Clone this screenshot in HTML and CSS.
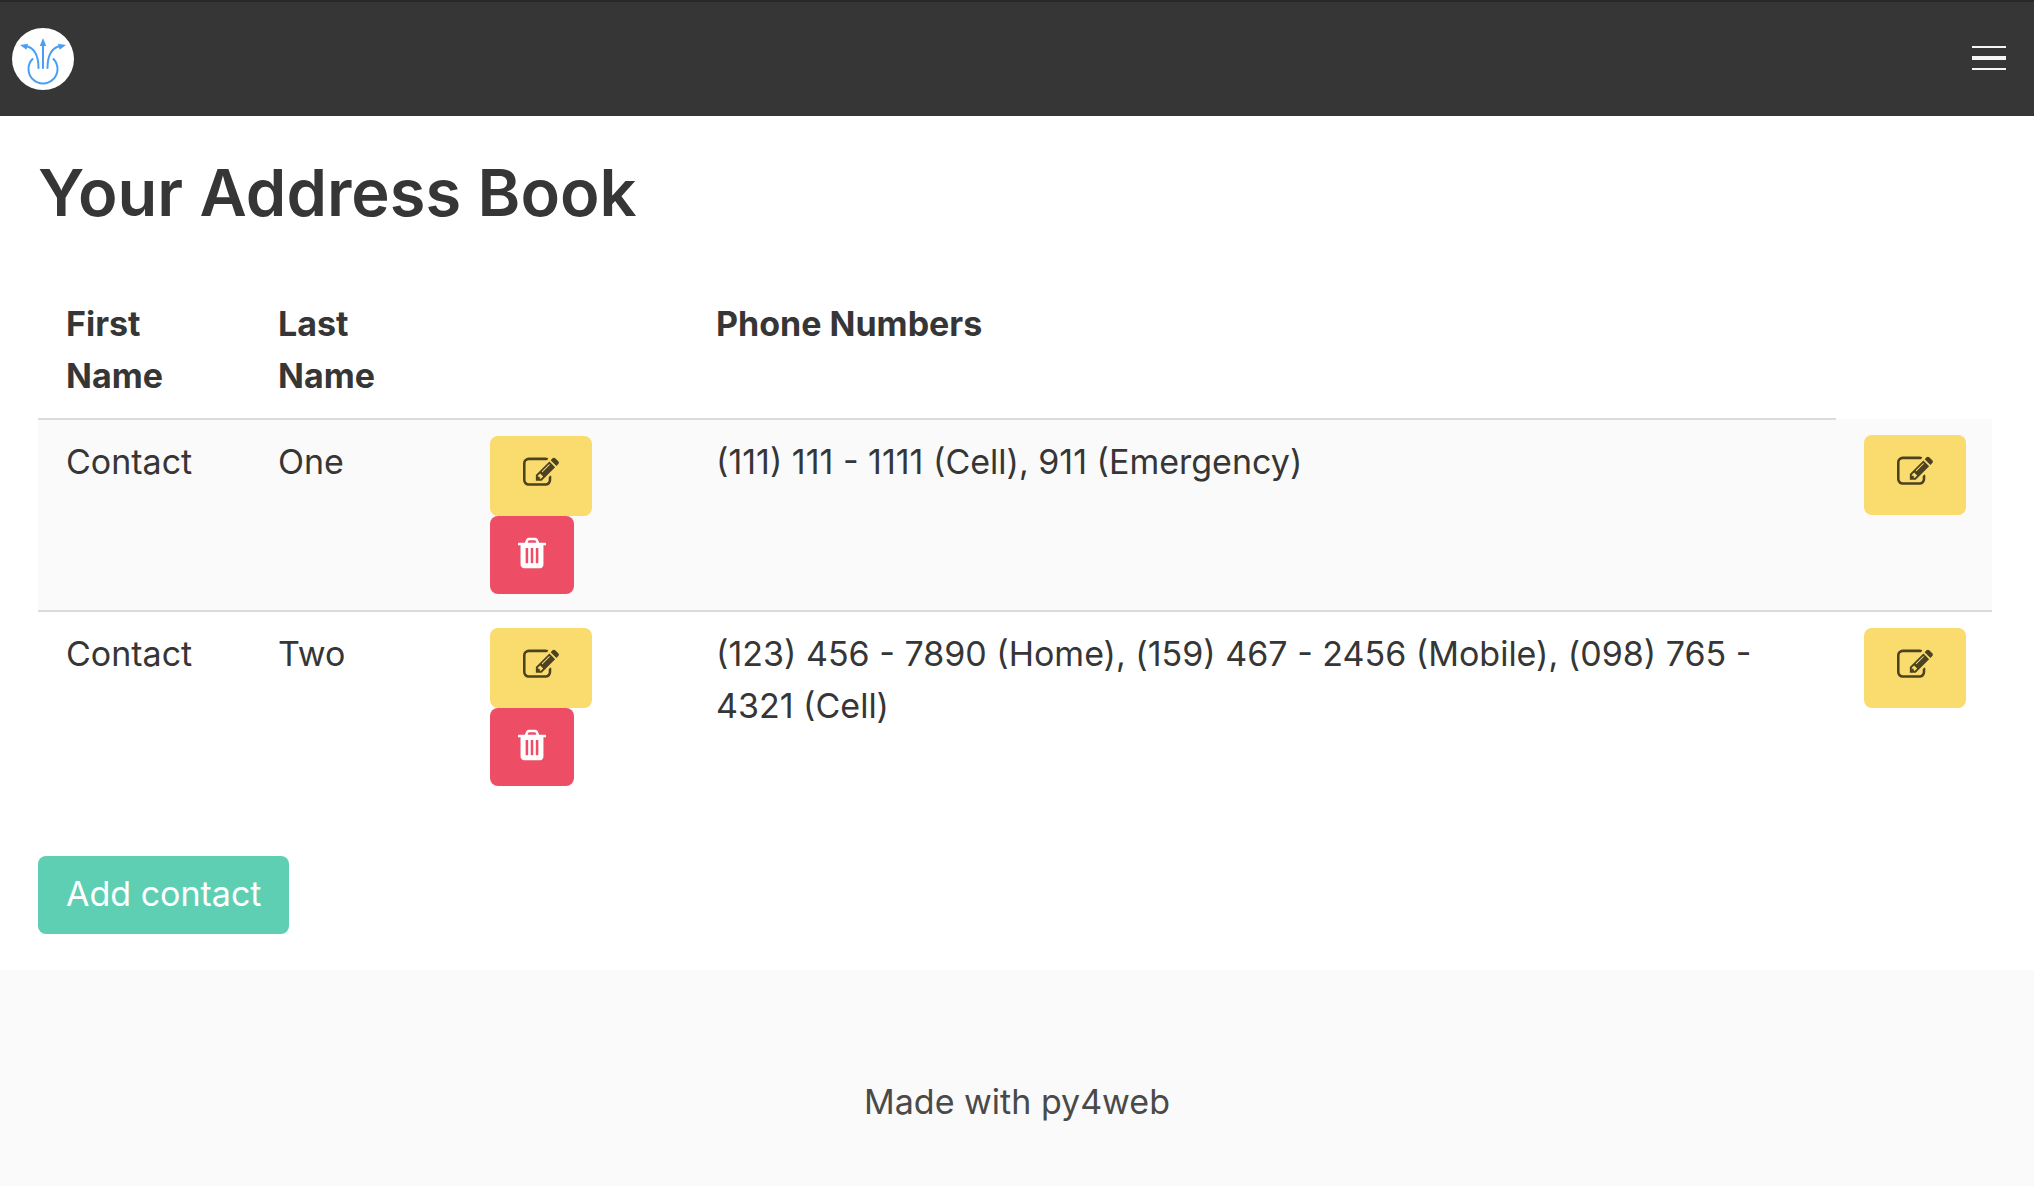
FILE: index.html
```html
<!DOCTYPE html>
<html lang="en">
<head>
<meta charset="utf-8">
<meta name="viewport" content="width=device-width, initial-scale=1">
<title>Your Address Book</title>
<link rel="stylesheet" href="styles.css">
</head>
<body>
<svg class="sprite" aria-hidden="true">
  <symbol id="icon-edit" viewBox="0 0 1792 1792">
    <path d="M888 1184l116-116-152-152-116 116v56h96v96h56zm440-720q-16-16-33 1l-350 350q-17 17-1 33t33-1l350-350q17-17 1-33zm80 594v190q0 119-84.500 203.500t-203.500 84.500h-832q-119 0-203.500-84.500t-84.500-203.500v-832q0-119 84.500-203.500t203.500-84.500h832q63 0 117 25 15 7 18 23 3 17-9 29l-49 49q-14 14-32 8-23-6-45-6h-832q-66 0-113 47t-47 113v832q0 66 47 113t113 47h832q66 0 113-47t47-113v-126q0-13 9-22l64-64q15-15 35-7t20 29zm-96-738l288 288-672 672h-288v-288zm444 132l-92 92-288-288 92-92q28-28 68-28t68 28l152 152q28 28 28 68t-28 68z"/>
  </symbol>
  <symbol id="icon-trash" viewBox="0 0 1408 1792">
    <path d="M512 1376v-704q0-14-9-23t-23-9h-64q-14 0-23 9t-9 23v704q0 14 9 23t23 9h64q14 0 23-9t9-23zm256 0v-704q0-14-9-23t-23-9h-64q-14 0-23 9t-9 23v704q0 14 9 23t23 9h64q14 0 23-9t9-23zm256 0v-704q0-14-9-23t-23-9h-64q-14 0-23 9t-9 23v704q0 14 9 23t23 9h64q14 0 23-9t9-23zm-544-992h448l-48-117q-7-9-17-11h-317q-10 2-17 11zm928 32v64q0 14-9 23t-23 9h-96v948q0 83-47 143.500t-113 60.500h-832q-66 0-113-58.500t-47-141.500v-952h-96q-14 0-23-9t-9-23v-64q0-14 9-23t23-9h309l70-167q15-37 54-63t79-26h320q40 0 79 26t54 63l70 167h309q14 0 23 9t9 23z"/>
  </symbol>
</svg>

<nav class="navbar">
  <a class="brand" href="#" aria-label="Home">
    <svg class="logo" viewBox="0 0 62 62" fill="none" stroke="#4a9ff5" stroke-width="2" stroke-linecap="round">
      <circle cx="31" cy="31" r="31" fill="#fff" stroke="none"/>
      <path d="M20.500 31A14.500 14.500 0 1 0 41.500 31M31 40V15M26.500 40C26.500 28 22.500 20 14 18M35.500 40C35.500 28 39.500 20 48 18"/>
      <path fill="#4a9ff5" stroke="none" d="M31 10l3.200 8h-6.400zM8 17l8-1.200-1.500 6zM54 17l-8-1.200 1.500 6z"/>
    </svg>
  </a>
  <button class="burger" type="button" aria-label="Menu"><span class="bar"></span><span class="bar bar-mid"></span><span class="bar"></span></button>
</nav>

<main class="content">
  <h1 class="title">Your Address Book</h1>
  <table class="table">
    <colgroup><col class="col-name"><col class="col-name"><col class="col-tools"><col><col class="col-edit"></colgroup>
    <thead>
      <tr><th>First Name</th><th>Last Name</th><th></th><th>Phone Numbers</th></tr>
    </thead>
    <tbody>
      <tr>
        <td>Contact</td>
        <td>One</td>
        <td><div class="tools">
          <button class="btn btn-edit" type="button" aria-label="Edit contact"><svg class="icon"><use href="#icon-edit"/></svg></button>
          <button class="btn btn-delete" type="button" aria-label="Delete contact"><svg class="icon icon-small"><use href="#icon-trash"/></svg></button>
        </div></td>
        <td>(111) 111 - 1111 (Cell), 911 (Emergency)</td>
        <td><div class="tools"><button class="btn btn-edit" type="button" aria-label="Edit phone numbers"><svg class="icon"><use href="#icon-edit"/></svg></button></div></td>
      </tr>
      <tr>
        <td>Contact</td>
        <td>Two</td>
        <td><div class="tools">
          <button class="btn btn-edit" type="button" aria-label="Edit contact"><svg class="icon"><use href="#icon-edit"/></svg></button>
          <button class="btn btn-delete" type="button" aria-label="Delete contact"><svg class="icon icon-small"><use href="#icon-trash"/></svg></button>
        </div></td>
        <td>(123) 456 - 7890 (Home), (159) 467 - 2456 (Mobile), (098) 765 - 4321 (Cell)</td>
        <td><div class="tools"><button class="btn btn-edit" type="button" aria-label="Edit phone numbers"><svg class="icon"><use href="#icon-edit"/></svg></button></div></td>
      </tr>
    </tbody>
  </table>
  <button class="btn btn-add" type="button">Add contact</button>
</main>

<footer class="footer"><p>Made with py4web</p></footer>
</body>
</html>
```
FILE: styles.css
```css
* {
  box-sizing: border-box;
}

body {
  margin: 0;
  background: #fff;
  color: #363636;
  font: 400 34px/52px Inter, "Liberation Sans", sans-serif;
}

.sprite {
  display: none;
}

.navbar {
  display: flex;
  align-items: center;
  justify-content: space-between;
  padding: 26px 28px 26px 12px;
  border-top: 2px solid #282828;
  background: #363636;
}

.brand,
.logo {
  display: block;
  width: 62px;
  height: 62px;
}

.burger {
  display: flex;
  flex-direction: column;
  gap: 8px;
  padding: 0 0 2px;
  border: 0;
  background: none;
}

.bar {
  width: 34px;
  height: 2px;
  background: #f5f5f5;
}

.bar-mid {
  height: 4px;
}

.content {
  padding: 36px 42px 36px 38px;
}

.title {
  margin: 0 0 48px;
  font-size: 65px;
  font-weight: 600;
  line-height: 82px;
}

.table {
  width: 100%;
  margin-bottom: 54px;
  border-collapse: collapse;
  table-layout: fixed;
}

.col-name {
  width: 212px;
}

.col-tools {
  width: 226px;
}

.col-edit {
  width: 156px;
}

.table th,
.table td {
  padding: 16px 26px 16px 28px;
  text-align: left;
  vertical-align: top;
}

.table th {
  border-bottom: 2px solid #dbdbdb;
  font-weight: 700;
}

.table tbody tr:nth-child(odd) {
  background: #fafafa;
}

.table tbody tr + tr td {
  border-top: 2px solid #dbdbdb;
}

.tools {
  display: flex;
  flex-direction: column;
  align-items: flex-start;
}

.btn {
  display: flex;
  align-items: center;
  justify-content: center;
  padding: 0;
  border: 0;
  border-radius: 8px;
  color: #fff;
  font: inherit;
}

.btn-edit {
  width: 102px;
  height: 80px;
  padding-bottom: 6px;
  background: #fadb6e;
  color: #4b4221;
}

.btn-delete {
  width: 84px;
  height: 78px;
  padding-bottom: 4px;
  background: #ed4e66;
}

.btn-add {
  padding: 12px 28px 14px;
  background: #5fcfb3;
}

.icon {
  width: 36px;
  height: 36px;
  fill: currentColor;
}

.icon-small {
  width: 28px;
}

.footer {
  padding: 106px 48px 58px;
  background: #fafafa;
  color: #4a4a4a;
  text-align: center;
}

.footer p {
  margin: 0;
}
```
